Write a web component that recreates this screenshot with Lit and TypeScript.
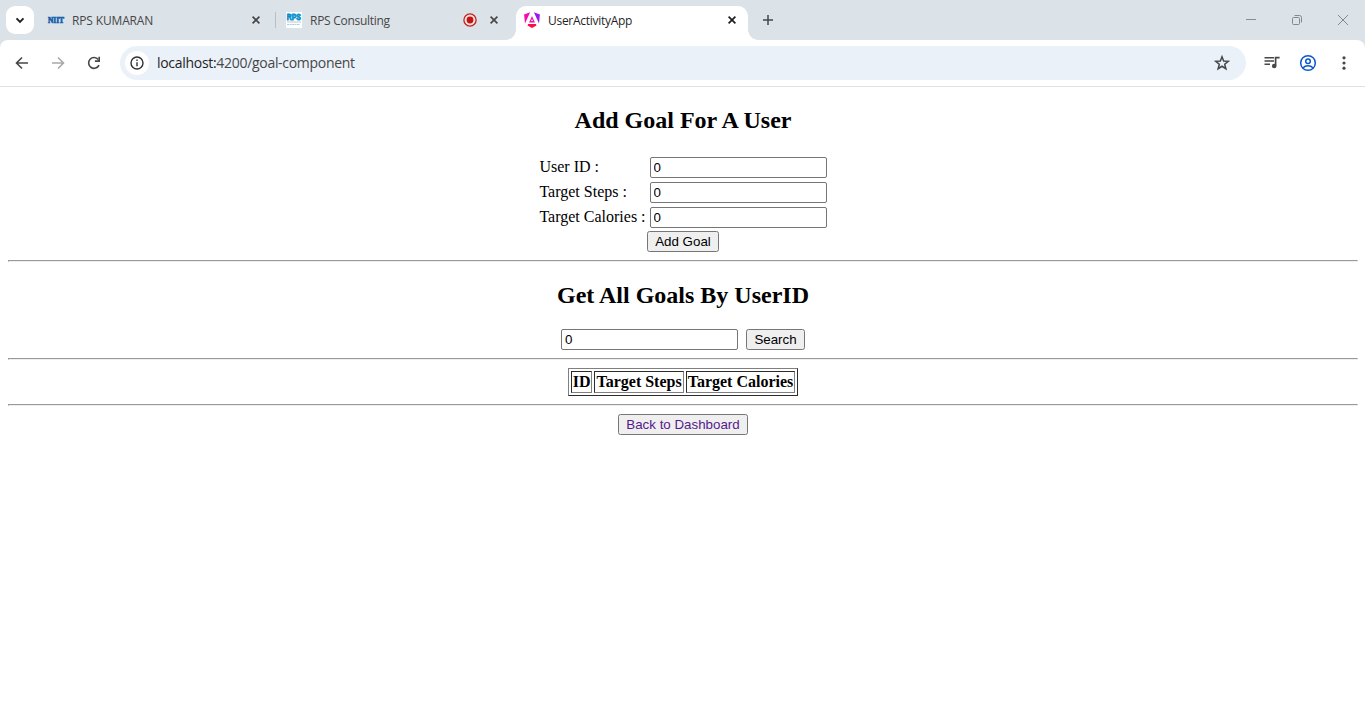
import { LitElement, html, css, svg } from "lit";
import { customElement, property } from "lit/decorators.js";

const glyphs: Record<string, unknown> = {
  chevron: svg`<path d="M4.5 6.3 8 9.8l3.5-3.5" fill="none" stroke="#1f1f1f" stroke-width="1.9"/>`,
  cross: svg`<path d="M4.6 4.6l6.8 6.8M11.4 4.6l-6.8 6.8" stroke="currentColor" stroke-width="1.7"/>`,
  plus: svg`<path d="M8 3v10M3 8h10" stroke="#474747" stroke-width="1.5"/>`,
  back: svg`<path d="M14 8H3M8 2.5 2.5 8 8 13.5" fill="none" stroke="#474747" stroke-width="1.6"/>`,
  forward: svg`<path d="M2 8h11M8 2.5 13.5 8 8 13.5" fill="none" stroke="#a8a9ab" stroke-width="1.6"/>`,
  reload: svg`<path d="M13 10.1A5.4 5.4 0 1 1 12.3 4.6" fill="none" stroke="#474747" stroke-width="1.6"/><path d="M14 1.8v5.1H8.9V5.3h3.5V1.8z" fill="#474747"/>`,
  info: svg`<circle cx="8" cy="8" r="6" fill="none" stroke="#303134" stroke-width="1.4"/><path d="M8 7.2v4M8 4.6v1.5" stroke="#303134" stroke-width="1.4"/>`,
  star: svg`<path d="M8 1.8l1.65 4.3 4.6.25-3.55 2.9 1.2 4.5L8 11.25l-3.9 2.5 1.2-4.5-3.55-2.9 4.6-.25z" fill="none" stroke="#474747" stroke-width="1.5"/>`,
  media: svg`<path d="M.5 2.8h9.5M.5 6h9.5M.5 9.2h5.5" stroke="#474747" stroke-width="1.6"/><path d="M11.6 10.8V2.7h4" fill="none" stroke="#474747" stroke-width="1.7"/><circle cx="10.2" cy="11" r="2.3" fill="#474747"/>`,
  profile: svg`<g fill="none" stroke="#0b57d0" stroke-width="1.5"><circle cx="8" cy="8" r="7.3"/><circle cx="8" cy="6.2" r="2.3"/><path d="M2.9 12.9c2.7-2.8 7.5-2.8 10.2 0"/></g>`,
  dots: svg`<g fill="#474747"><circle cx="8" cy="2.8" r="1.6"/><circle cx="8" cy="8" r="1.6"/><circle cx="8" cy="13.2" r="1.6"/></g>`,
  record: svg`<circle cx="8" cy="8" r="6.1" fill="#f3e3e4" stroke="#c5221f" stroke-width="1.3"/><circle cx="8" cy="8" r="3.4" fill="#c5140c"/>`,
  minimize: svg`<path d="M3 7.5h10" stroke="#8a8d90"/>`,
  restore: svg`<g fill="none" stroke="#85888b"><rect x="3.5" y="5.5" width="7" height="7" rx="1"/><path d="M5.5 3.5h5a2 2 0 0 1 2 2v5"/></g>`,
  exit: svg`<path d="M3 3l10 10M13 3 3 13" stroke="#85888b"/>`,
  niit: svg`<text x="0" y="10.7" textLength="16" lengthAdjust="spacingAndGlyphs" font-family="Liberation Serif, serif" font-weight="700" font-size="8" fill="#145fae" stroke="#145fae" stroke-width=".7">NIIT</text>`,
  rps: svg`<rect width="16" height="16" fill="#fff"/><text x=".8" y="8" textLength="14" lengthAdjust="spacingAndGlyphs" font-family="Liberation Sans, sans-serif" font-weight="700" font-size="8.5" fill="#0790cd" stroke="#0790cd" stroke-width=".8">RPS</text><path d="M1 10h14" stroke="#d3d7da" stroke-width="1.4"/><path d="M1 12.5h13" stroke="#a3d3ec" stroke-width="1" stroke-dasharray="2 .5"/>`,
  angular: svg`<path d="M6.1.2.1 2.4l.9 9.1z" fill="#f50bb4"/><path d="M9.9.2l6 2.2-.9 9.1z" fill="#9a17f5"/><path d="M8 4.1 5.1 10.6h5.8zM8 6.9l1 2.2H7z" fill="#ee12a5" fill-rule="evenodd"/><path d="M4.1 11.9h7.8l.6 1.6L8 16l-4.5-2.5z" fill="#ff0a4d"/>`,
};

@customElement("ui-icon")
class UiIcon extends LitElement {
  static styles = css`
    :host { display: block; flex: none; width: 16px; height: 16px; }
    .glyph { display: block; width: 100%; height: 100%; overflow: visible; }
  `;
  @property() name = "";
  render() {
    return html`<svg class="glyph" viewBox="0 0 16 16">${glyphs[this.name]}</svg>`;
  }
}

@customElement("browser-chrome")
class BrowserChrome extends LitElement {
  static styles = css`
    :host { display: block; font-family: "Open Sans", "Noto Sans", sans-serif; background: #dbe2e8; }
    .strip { display: flex; height: 40px; align-items: center; }
    .menu { display: grid; place-items: center; width: 28px; height: 28px; margin-left: 6px; border-radius: 9px; background: #fff; }
    .tab { display: flex; align-items: center; box-sizing: border-box; flex: none; height: 28px; font-size: 12px; color: #474747; white-space: nowrap; padding: 0 11px 0 8px; }
    .first { width: 235px; margin-left: 6px; }
    .second { width: 240px; padding: 0 14px 0 10px; }
    .active { width: 232px; height: 34px; align-self: flex-end; padding: 0 8px 6px; background: #fff; border-radius: 10px 10px 0 0; color: #1f1f1f; position: relative; }
    .active::before, .active::after { content: ""; position: absolute; bottom: 0; width: 10px; height: 10px; }
    .active::before { left: -10px; background: radial-gradient(circle at 0 0, transparent 9.5px, #fff 10px); }
    .active::after { right: -10px; background: radial-gradient(circle at 100% 0, transparent 9.5px, #fff 10px); }
    .title { margin-left: 8px; flex: 1; line-height: 18px; padding-top: 2px; }
    .t1 { letter-spacing: -0.15px; }
    .t2 { letter-spacing: -0.28px; }
    .t3 { letter-spacing: -0.28px; }
    .record { margin-right: 8px; }
    .rule { width: 1px; height: 16px; background: #b9bfc5; }
    .new { margin-left: 12px; }
    .window { display: flex; margin-left: auto; margin-right: 14px; gap: 30px; }
    .bar { display: flex; align-items: center; box-sizing: border-box; height: 47px; background: #fff; border-radius: 8px 8px 0 0; border-bottom: 1px solid #dfe1e4; padding: 0 13px 0 14px; }
    .nav { display: flex; gap: 20px; }
    .address { display: flex; align-items: center; box-sizing: border-box; flex: 1; height: 34px; margin: 0 18px; padding: 0 16px 0 5px; border-radius: 17px; background: #eaf1f9; }
    .site { display: grid; place-items: center; width: 24px; height: 24px; border-radius: 50%; background: #fff; }
    .url { flex: 1; margin-left: 8px; font-size: 14px; line-height: 20px; letter-spacing: -0.3px; color: #474747; }
    .host { color: #1f1f1f; }
    .tools { display: flex; gap: 20px; }
  `;
  render() {
    return html`
      <div class="strip">
        <div class="menu"><ui-icon name="chevron"></ui-icon></div>
        <div class="tab first"><ui-icon name="niit"></ui-icon><span class="title"><span class="t1">RPS KUMARAN</span></span><ui-icon name="cross"></ui-icon></div>
        <div class="rule"></div>
        <div class="tab second"><ui-icon name="rps"></ui-icon><span class="title"><span class="t2">RPS Consulting</span></span><ui-icon class="record" name="record"></ui-icon><ui-icon name="cross"></ui-icon></div>
        <div class="tab active"><ui-icon name="angular"></ui-icon><span class="title"><span class="t3">UserActivityApp</span></span><ui-icon name="cross"></ui-icon></div>
        <ui-icon class="new" name="plus"></ui-icon>
        <div class="window"><ui-icon name="minimize"></ui-icon><ui-icon name="restore"></ui-icon><ui-icon name="exit"></ui-icon></div>
      </div>
      <div class="bar">
        <div class="nav"><ui-icon name="back"></ui-icon><ui-icon name="forward"></ui-icon><ui-icon name="reload"></ui-icon></div>
        <div class="address">
          <div class="site"><ui-icon name="info"></ui-icon></div>
          <span class="url"><span class="host">localhost:</span>4200/goal-component</span>
          <ui-icon name="star"></ui-icon>
        </div>
        <div class="tools"><ui-icon name="media"></ui-icon><ui-icon name="profile"></ui-icon><ui-icon name="dots"></ui-icon></div>
      </div>
    `;
  }
}

@customElement("goal-page")
class GoalPage extends LitElement {
  static styles = css`
    :host { display: flow-root; padding: 0 7px 0 8px; font: 16px "Liberation Serif", serif; color: #000; text-align: center; }
    .heading { margin: 20px 0; font-size: 24px; font-weight: 700; line-height: 27px; }
    .form { margin: 0 auto; border-spacing: 2px; text-align: left; line-height: 18px; }
    .form td { padding: 1px; }
    .form .label { padding-bottom: 3px; }
    .field { display: block; box-sizing: border-box; width: 177px; height: 21px; margin: 0; padding: 1px 3px; border: 1px solid #767676; border-radius: 2px; background: #fff; font: 13.333px "Liberation Sans", sans-serif; color: #000; outline: none; }
    .button { display: block; box-sizing: border-box; height: 21px; margin: 0 auto; padding: 0 7px; border: 1px solid #767676; border-radius: 2.5px; background: #efefef; font: 13.333px/19px "Liberation Sans", sans-serif; color: #000; white-space: nowrap; }
    .add { width: 72px; }
    .find { width: 59px; margin: 0; }
    .home { width: 130px; color: #551a8b; }
    .line { box-sizing: border-box; height: 2px; margin: 8px 0; border: 1px solid; border-color: #9a9a9a #eee #eee #9a9a9a; }
    .search { display: flex; justify-content: center; gap: 8px; }
    .goals { margin: 0 auto; border: 1px outset #808080; border-spacing: 2px; line-height: 18px; }
    .goals th { padding: 1px; border: 1px inset #808080; }
  `;
  render() {
    const fields = ["User ID :", "Target Steps :", "Target Calories :"];
    return html`
      <h2 class="heading">Add Goal For A User</h2>
      <table class="form">
        ${fields.map((label) => html`<tr><td class="label">${label}</td><td><input class="field" .value=${"0"} /></td></tr>`)}
      </table>
      <button class="button add">Add Goal</button>
      <hr class="line" />
      <h2 class="heading">Get All Goals By UserID</h2>
      <div class="search"><input class="field" .value=${"0"} /><button class="button find">Search</button></div>
      <hr class="line" />
      <table class="goals"><tr><th>ID</th><th>Target Steps</th><th>Target Calories</th></tr></table>
      <hr class="line" />
      <button class="button home">Back to Dashboard</button>
    `;
  }
}

@customElement("app-root")
class AppRoot extends LitElement {
  static styles = css`
    :host { display: block; height: 717px; overflow: hidden; background: #fff; }
  `;
  render() {
    return html`<browser-chrome></browser-chrome><goal-page></goal-page>`;
  }
}
